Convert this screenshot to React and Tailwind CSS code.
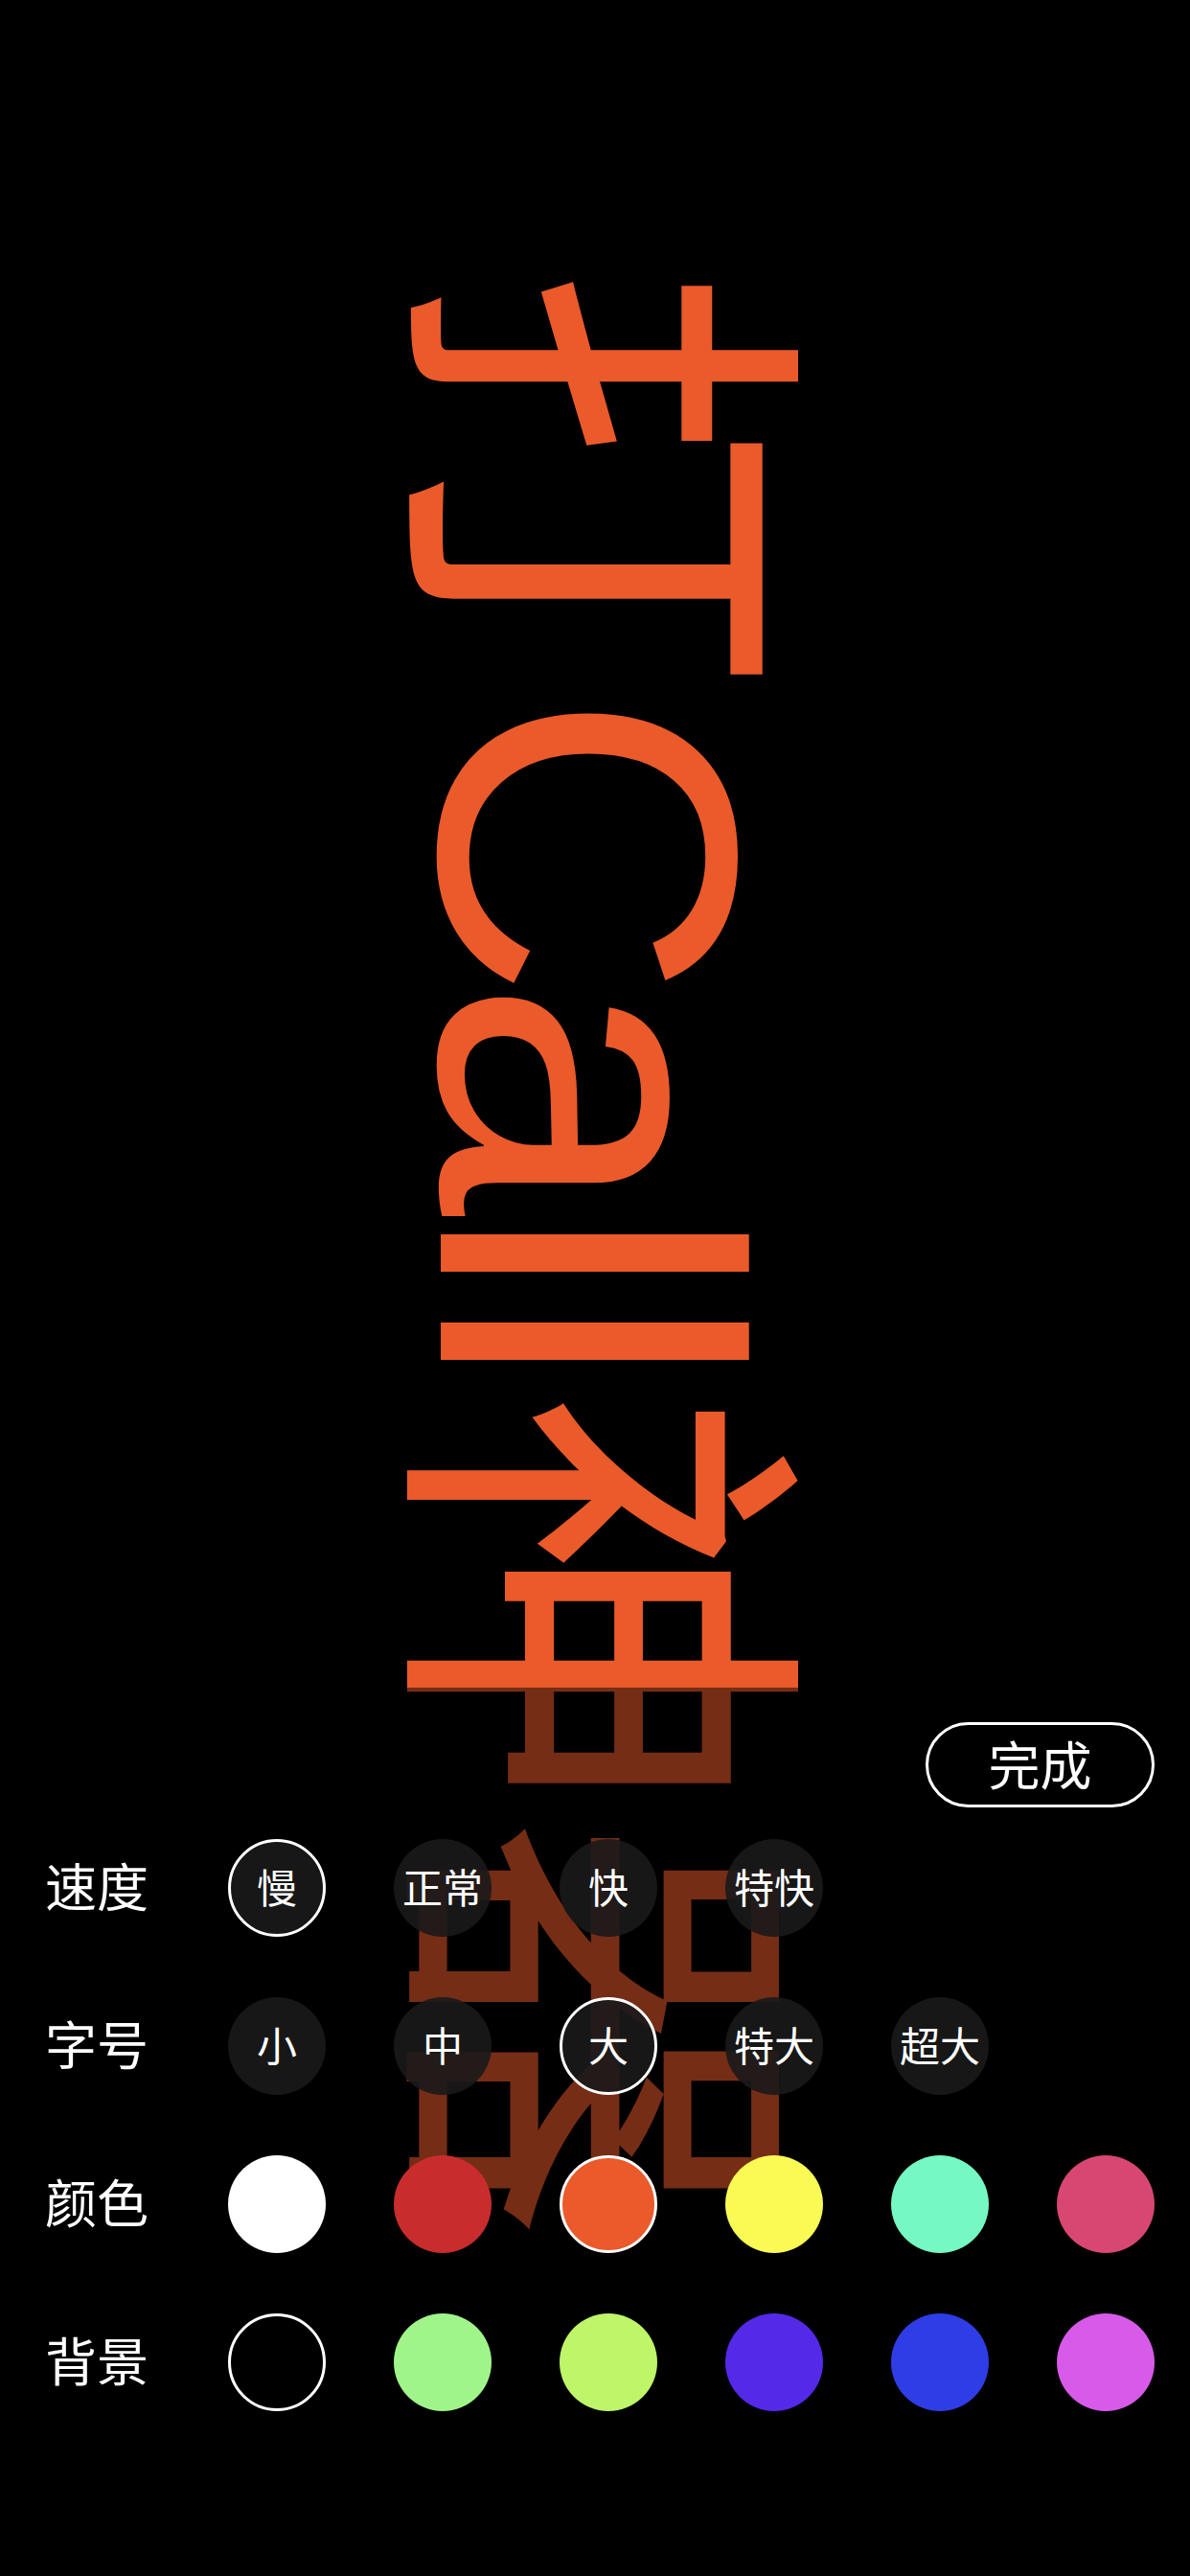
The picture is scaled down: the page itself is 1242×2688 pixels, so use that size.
import React from "react";

const bigChars = [
  { ch: "打", w: 445 },
  { ch: "C", w: 300 },
  { ch: "a", w: 236 },
  { ch: "l", w: 92 },
  { ch: "l", w: 100 },
  { ch: "神", w: 445 },
  { ch: "器", w: 445 },
];

const speeds = [
  { t: "慢", sel: true },
  { t: "正常" },
  { t: "快" },
  { t: "特快" },
];
const sizes = [
  { t: "小" },
  { t: "中" },
  { t: "大", sel: true },
  { t: "特大" },
  { t: "超大" },
];
const colors = [
  { c: "#ffffff" },
  { c: "#c92c2c" },
  { c: "#ea5a2a", sel: true },
  { c: "#fafa55" },
  { c: "#75f8c2" },
  { c: "#d84772" },
];
const bgs = [
  { c: "#000000", sel: true },
  { c: "#a0f58a" },
  { c: "#bef569" },
  { c: "#5429e8" },
  { c: "#2f3de6" },
  { c: "#d85ae8" },
];

function Row({ label, children }) {
  return (
    <div className="flex items-center h-[102px]">
      <div className="w-[191px] text-[54px] leading-none text-white pb-[6px]">{label}</div>
      <div className="flex gap-[71px]">{children}</div>
    </div>
  );
}

function TextOpt({ t, sel }) {
  return (
    <div
      className={
        "w-[102px] h-[102px] rounded-full flex items-center justify-center bg-[#191919]/90 text-white text-[42px] leading-none pb-[4px] " +
        (sel ? "border-[3px] border-white" : "")
      }
    >
      {t}
    </div>
  );
}

function ColorOpt({ c, sel }) {
  return (
    <div
      className={"w-[102px] h-[102px] rounded-full " + (sel ? "border-[3px] border-white" : "")}
      style={{ backgroundColor: c }}
    />
  );
}

export default function App() {
  return (
    <div
      className="relative w-[1242px] h-[2688px] overflow-hidden bg-black flex flex-col justify-end"
      style={{ fontFamily: '"Noto Sans CJK SC", "Noto Sans", sans-serif' }}
    >
      <div
        className="absolute left-[836px] top-[277px] origin-top-left rotate-90 whitespace-nowrap text-[444px] leading-none text-[#ea5a2a] flex"
        style={{ fontFamily: '"Liberation Sans", "Noto Sans CJK SC", sans-serif' }}
      >
        {bigChars.map((b, i) => (
          <span key={i} className="inline-block shrink-0" style={{ width: b.w }}>
            {b.ch}
          </span>
        ))}
      </div>

      <div className="relative h-[927px] bg-black/50 pt-[36px] pl-[47px] pr-[37px]">
        <div className="flex justify-end">
          <div className="w-[239px] h-[89px] rounded-full border-[3px] border-white flex items-center justify-center text-white text-[54px] leading-none pb-[4px]">
            完成
          </div>
        </div>
        <div className="mt-[33px] flex flex-col gap-[63px]">
          <Row label="速度">
            {speeds.map((s, i) => (
              <TextOpt key={i} {...s} />
            ))}
          </Row>
          <Row label="字号">
            {sizes.map((s, i) => (
              <TextOpt key={i} {...s} />
            ))}
          </Row>
          <Row label="颜色">
            {colors.map((s, i) => (
              <ColorOpt key={i} {...s} />
            ))}
          </Row>
          <Row label="背景">
            {bgs.map((s, i) => (
              <ColorOpt key={i} {...s} />
            ))}
          </Row>
        </div>
      </div>
    </div>
  );
}
